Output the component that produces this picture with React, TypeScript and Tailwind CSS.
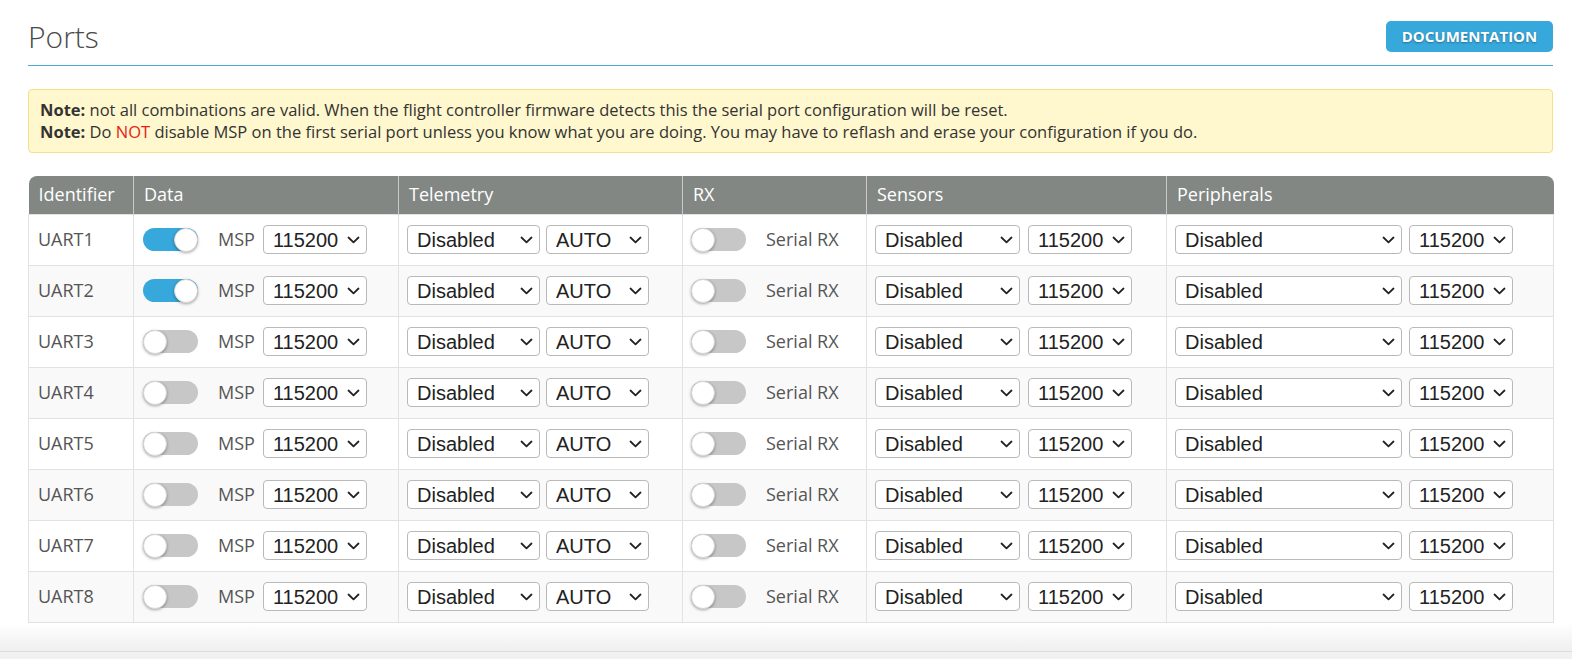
import React from 'react'

const sans = { fontFamily: '"Open Sans", "Noto Sans", sans-serif' }
const arial = { fontFamily: '"Liberation Sans", Arial, sans-serif' }

function Chevron() {
  return (
    <svg width="13" height="8" viewBox="0 0 13 8" className="pointer-events-none absolute right-[7px] top-1/2 -translate-y-1/2">
      <polyline points="1.5,1.5 6.5,6.3 11.5,1.5" fill="none" stroke="#222" strokeWidth="1.8" strokeLinecap="round" strokeLinejoin="round" />
    </svg>
  )
}

function Select({ value, width }: { value: string; width: string }) {
  return (
    <div className={`relative shrink-0 ${width}`}>
      <select
        defaultValue={value}
        style={arial}
        className="h-[29px] w-full appearance-none rounded-[4px] border border-[#b9b9b9] bg-white pl-[9px] text-[20px] leading-none text-[#222]"
      >
        <option>{value}</option>
      </select>
      <Chevron />
    </div>
  )
}

function Toggle({ on }: { on: boolean }) {
  return (
    <span
      className={`flex h-[23px] w-[55px] shrink-0 items-center rounded-full ${on ? 'justify-end bg-[#37a8db]' : 'justify-start bg-[#c7c7c7]'}`}
    >
      <span className="h-[24px] w-[24px] rounded-full border border-[#d6d6d6] bg-white shadow-[0_1px_3px_rgba(0,0,0,0.35)]" />
    </span>
  )
}

const ports = ['UART1', 'UART2', 'UART3', 'UART4', 'UART5', 'UART6', 'UART7', 'UART8']

export default function App() {
  return (
    <div className="flex h-[659px] w-full flex-col overflow-hidden bg-white" style={sans}>
      <main className="pl-[28px] pr-[19px]">
        <div className="flex h-[66px] items-center justify-between border-b border-[#49acd4] pt-[8px]">
          <h1 className="text-[30px] font-light leading-none text-[#4a4a4a]">Ports</h1>
          <button
            type="button"
            className="flex h-[31px] w-[167px] items-center justify-center rounded-[5px] bg-[#37a8db] text-[15px] font-bold text-white [text-shadow:0_1px_2px_rgba(0,0,0,0.35)]"
          >
            DOCUMENTATION
          </button>
        </div>

        <section className="mt-[23px] rounded-[4px] border border-[#f4e08a] bg-[#fff7cd] px-[11px] py-[9px] text-[16.5px] leading-[22px] text-[#333]">
          <p>
            <b>Note:</b> not all combinations are valid. When the flight controller firmware detects this the serial port configuration will be reset.
          </p>
          <p>
            <b>Note:</b> Do <span className="text-[#e2231a]">NOT</span> disable MSP on the first serial port unless you know what you are doing. You may have to reflash and erase your configuration if you do.
          </p>
        </section>

        <table className="mt-[23px] w-[1525px] table-fixed border-collapse">
          <colgroup>
            <col className="w-[105px]" />
            <col className="w-[265px]" />
            <col className="w-[284px]" />
            <col className="w-[184px]" />
            <col className="w-[300px]" />
            <col className="w-[387px]" />
          </colgroup>
          <thead>
            <tr className="h-[38px] text-left text-[18px] font-normal text-white">
              <th className="rounded-tl-[8px] bg-[#828784] pl-[10px] font-normal">Identifier</th>
              <th className="border-l border-[#c9cbca] bg-[#828784] pl-[10px] font-normal">Data</th>
              <th className="border-l border-[#c9cbca] bg-[#828784] pl-[10px] font-normal">Telemetry</th>
              <th className="border-l border-[#c9cbca] bg-[#828784] pl-[10px] font-normal">RX</th>
              <th className="border-l border-[#c9cbca] bg-[#828784] pl-[10px] font-normal">Sensors</th>
              <th className="rounded-tr-[8px] border-l border-[#c9cbca] bg-[#828784] pl-[10px] font-normal">Peripherals</th>
            </tr>
          </thead>
          <tbody className="text-[18px] text-[#555]">
            {ports.map((p, i) => (
              <tr key={p} className={`h-[51px] border border-[#e2e2e2] ${i % 2 === 1 ? 'bg-[#f9f9f9]' : 'bg-white'}`}>
                <td className="border-l border-[#e2e2e2] pl-[9px]">{p}</td>
                <td className="border-l border-[#e2e2e2] pl-[9px]">
                  <div className="flex items-center">
                    <Toggle on={i < 2} />
                    <span className="ml-[20px] mr-[8px]">MSP</span>
                    <Select value="115200" width="w-[104px]" />
                  </div>
                </td>
                <td className="border-l border-[#e2e2e2] pl-[8px]">
                  <div className="flex items-center gap-[6px]">
                    <Select value="Disabled" width="w-[133px]" />
                    <Select value="AUTO" width="w-[103px]" />
                  </div>
                </td>
                <td className="border-l border-[#e2e2e2] pl-[8px]">
                  <div className="flex items-center">
                    <Toggle on={false} />
                    <span className="ml-[20px]">Serial RX</span>
                  </div>
                </td>
                <td className="border-l border-[#e2e2e2] pl-[8px]">
                  <div className="flex items-center gap-[8px]">
                    <Select value="Disabled" width="w-[145px]" />
                    <Select value="115200" width="w-[104px]" />
                  </div>
                </td>
                <td className="border-l border-r border-[#e2e2e2] pl-[8px]">
                  <div className="flex items-center gap-[7px]">
                    <Select value="Disabled" width="w-[227px]" />
                    <Select value="115200" width="w-[104px]" />
                  </div>
                </td>
              </tr>
            ))}
          </tbody>
        </table>
      </main>
      <div className="mt-auto h-[28px] bg-gradient-to-b from-white to-[#efefef]" />
      <footer className="h-[8px] border-t border-[#dcdcdc] bg-[#f1f1f1]" />
    </div>
  )
}
